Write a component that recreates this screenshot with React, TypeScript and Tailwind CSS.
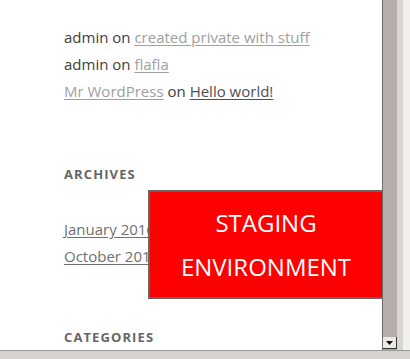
import React from "react";

const recentComments = [
  { author: "admin", authorLink: false, post: "created private with stuff", postDark: false },
  { author: "admin", authorLink: false, post: "flafla", postDark: false },
  { author: "Mr WordPress", authorLink: true, post: "Hello world!", postDark: true },
];

const archives = ["January 2016", "October 2015"];

export default function App() {
  return (
    <div className="w-[410px] h-[359px] overflow-hidden flex flex-col bg-white font-['Open_Sans',sans-serif]">
      <div className="flex flex-1 min-h-0">
        {/* Page content */}
        <div className="relative flex-1 overflow-hidden bg-white pl-[64px] pt-[24px] text-[15px]">
          <ul className="leading-[27px] text-[#404040]">
            {recentComments.map((c, i) => (
              <li key={i}>
                {c.authorLink ? (
                  <a className="text-[#a0a0a0] underline underline-offset-2">{c.author}</a>
                ) : (
                  c.author
                )}{" "}
                on{" "}
                <a
                  className={`underline underline-offset-2 ${
                    c.postDark ? "text-[#505050]" : "text-[#a0a0a0]"
                  }`}
                >
                  {c.post}
                </a>
              </li>
            ))}
          </ul>

          <h2 className="mt-[61px] text-[13px] font-bold tracking-[1.1px] text-[#666] leading-[16px]">
            ARCHIVES
          </h2>
          <ul className="mt-[34px] leading-[27px] text-[#707070]">
            {archives.map((a) => (
              <li key={a}>
                <a className="underline underline-offset-2">{a}</a>
              </li>
            ))}
          </ul>

          <h2 className="mt-[59px] text-[13px] font-bold tracking-[1.1px] text-[#666] leading-[16px]">
            CATEGORIES
          </h2>

          {/* Staging banner */}
          <div className="absolute left-[148px] top-[190px] w-[236px] h-[109px] border-2 border-[#666] bg-[#ff0000] text-white text-[24px] leading-[44px] text-center flex flex-col justify-center">
            <div>STAGING</div>
            <div>ENVIRONMENT</div>
          </div>
        </div>

        {/* Scrollbar */}
        <div className="w-[28px] flex">
          <div className="w-px bg-[#6b6b6b]" />
          <div className="w-[14px] flex flex-col bg-[#b5ada9]">
            <div className="flex-1" />
            <div className="h-[12px] mb-px bg-[#ece9e5] border-r border-b border-[#333] flex items-center justify-center">
              <svg width="7" height="4" viewBox="0 0 7 4">
                <path d="M0 0h7L3.5 4z" fill="#111" />
              </svg>
            </div>
          </div>
          <div className="w-[6px] bg-[#d9d5d1]" />
          <div className="flex-1 bg-[#f2f0ee]" />
        </div>
      </div>

      {/* Bottom bar */}
      <div className="h-[9px] border-t border-[#9a9a9a] bg-[#d6d2ce]" />
    </div>
  );
}
